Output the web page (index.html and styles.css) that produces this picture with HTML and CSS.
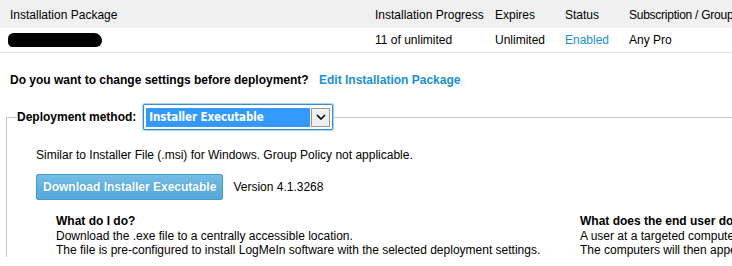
FILE: index.html
```html
<!DOCTYPE html>
<html>
    <head>
        <meta charset="UTF-8">
        <meta name="viewport" content="width=device-width, initial-scale=1.0">
        <link rel="stylesheet" href="styles.css">
    </head>
    <body>
        <table class="packages">
            <thead>
                <tr>
                    <th class="col-name">Installation Package</th>
                    <th class="col-progress">Installation Progress</th>
                    <th class="col-expires">Expires</th>
                    <th class="col-status">Status</th>
                    <th class="col-group">Subscription / Group</th>
                </tr>
            </thead>
            <tbody>
                <tr>
                    <td class="col-name"><span class="redacted"></span></td>
                    <td>11 of unlimited</td>
                    <td>Unlimited</td>
                    <td class="enabled">Enabled</td>
                    <td>Any Pro</td>
                </tr>
            </tbody>
        </table>

        <p class="question">Do you want to change settings before deployment? <a href="#" class="edit">Edit Installation Package</a></p>

        <fieldset class="deploy">
            <legend>
                <span class="legend-label">Deployment method:</span>
                <span class="fake-select">
                    <span class="selected">Installer Executable</span>
                    <span class="arrow">
                        <svg width="10" height="6" viewBox="0 0 10 6"><path d="M1 1 L5 5 L9 1" fill="none" stroke="#000" stroke-width="1.6"/></svg>
                    </span>
                </span>
            </legend>
            <div class="deploy-body">
                <p class="desc">Similar to Installer File (.msi) for Windows. Group Policy not applicable.</p>
                <div class="download-row">
                    <button type="button" class="download">Download Installer Executable</button>
                    <span class="version">Version 4.1.3268</span>
                </div>
                <div class="help">
                    <div class="help-col">
                        <b>What do I do?</b><br>
                        Download the .exe file to a centrally accessible location.<br>
                        The file is pre-configured to install LogMeIn software with the selected deployment settings.
                    </div>
                    <div class="help-col">
                        <b>What does the end user do?</b><br>
                        A user at a targeted computer runs the .exe file.<br>
                        The computers will then appear in your account.
                    </div>
                </div>
            </div>
        </fieldset>
    </body>
</html>
```

FILE: styles.css
```css
body{
    margin: 0;
    font-family: "Liberation Sans", Arial, sans-serif;
    font-size: 12px;
    color: #000;
    overflow: hidden;
}
.packages{
    border-collapse: collapse;
    width: 736px;
    white-space: nowrap;
}
.packages th{
    background-color: #f0f0f0;
    font-weight: normal;
    text-align: left;
    height: 27px;
    padding: 1px 0 0 9px;
}
.packages td{
    height: 24px;
    padding: 0 0 0 9px;
    border-bottom: 1px solid #dedede;
}
.packages .col-name{
    width: 356px;
    padding-left: 10px;
}
.col-progress{
    width: 111px;
}
.col-expires{
    width: 61px;
}
.col-status{
    width: 55px;
}
.packages .col-group{
    letter-spacing: -0.25px;
}
.enabled{
    color: #1a8fd6;
}
.redacted{
    display: inline-block;
    width: 94px;
    height: 14px;
    background: #000;
    border-radius: 7px 10px 8px 6px;
    margin-left: -2px;
    vertical-align: middle;
}
.question{
    margin: 20px 0 0 10px;
    font-weight: bold;
}
.edit{
    color: #1a8fd6;
    text-decoration: none;
    margin-left: 7px;
}
.deploy{
    margin: 17px 0 0 6px;
    padding: 0;
    border: none;
    border-top: 1px solid #c6c6c6;
    border-left: 1px solid #c6c6c6;
}
.deploy legend{
    padding: 0;
    margin-left: 9px;
    display: flex;
    align-items: center;
}
.legend-label{
    font-weight: bold;
    padding: 0 7px 0 1px;
}
.fake-select{
    display: flex;
    align-items: center;
    width: 184px;
    height: 20px;
    padding: 2px;
    border: 1px solid #3a8bd0;
    border-radius: 2px;
    box-shadow: 0 0 0 1px #a9d1f2;
    background: #fff;
}
.selected{
    flex: 1;
    height: 19px;
    line-height: 19px;
    background: #3399ff;
    color: #fff;
    font-family: "DejaVu Sans Condensed", "DejaVu Sans", Verdana, sans-serif;
    font-weight: bold;
    font-size: 11.5px;
    padding-left: 3px;
    letter-spacing: -0.1px;
}
.arrow{
    width: 17px;
    height: 17px;
    border: 1px solid #9a9a9a;
    background: #f0f0f0;
    display: flex;
    align-items: center;
    justify-content: center;
    margin-left: 1px;
}
.deploy-body{
    padding-left: 29px;
}
.desc{
    margin: 18px 0 0 0;
}
.download-row{
    display: flex;
    align-items: center;
    margin-top: 12px;
}
.download{
    font-family: "Liberation Sans", Arial, sans-serif;
    font-size: 12px;
    font-weight: bold;
    color: #fff;
    height: 26px;
    padding: 0 6px;
    border: 1px solid #4a9acb;
    border-radius: 2px;
    background: linear-gradient(#74bde6, #53a8da);
    text-shadow: 0 0 1px #3b8fc4;
}
.version{
    margin-left: 10px;
}
.help{
    display: grid;
    grid-template-columns: 524px 1fr;
    margin: 14px 0 0 20px;
    line-height: 14px;
    white-space: nowrap;
}
.help b{
    display: inline-block;
    margin-bottom: 1px;
}
```
